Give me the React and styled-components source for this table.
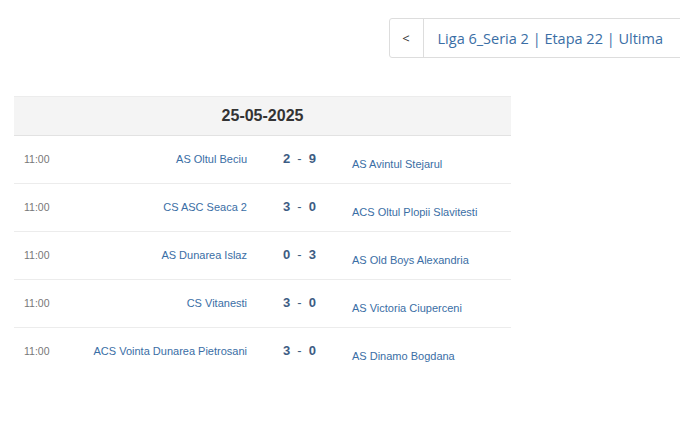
import React from "react";
import styled, { createGlobalStyle } from "styled-components";

const GlobalStyle = createGlobalStyle`
  body {
    margin: 0;
    background: #ffffff;
    font-family: "Liberation Sans", Arial, sans-serif;
  }
`;

const Page = styled.div`
  width: 680px;
  height: 427px;
  overflow: hidden;
  display: flex;
  flex-direction: column;
`;

const NavRow = styled.div`
  display: flex;
  justify-content: flex-end;
  padding-top: 18px;
  margin-right: -20px;
`;

const Nav = styled.div`
  display: flex;
  height: 40px;
  border: 1px solid #dddddd;
  border-radius: 3px;
  box-sizing: border-box;
  font-family: "Open Sans", sans-serif;
`;

const BackButton = styled.div`
  width: 33px;
  display: flex;
  align-items: center;
  justify-content: center;
  border-right: 1px solid #dddddd;
  color: #333333;
  font-size: 13px;
`;

const NavLabel = styled.div`
  display: flex;
  align-items: center;
  padding: 0 36px 0 14px;
  color: #3a6ea5;
  font-size: 14.5px;
`;

const Table = styled.div`
  width: 497px;
  margin: 38px 0 0 14px;
`;

const DateHeader = styled.div`
  height: 38px;
  background: #f4f4f4;
  border-top: 1px solid #ececec;
  border-bottom: 1px solid #e2e2e2;
  display: flex;
  align-items: center;
  justify-content: center;
  font-size: 16px;
  font-weight: bold;
  color: #333333;
`;

const Row = styled.div`
  display: grid;
  grid-template-columns: 70px 163px 105px 1fr;
  height: 47px;
  border-bottom: 1px solid ${(p) => (p.last ? "transparent" : "#ececec")};
  box-sizing: content-box;
`;

const Time = styled.div`
  padding: 17px 0 0 10px;
  font-size: 10.5px;
  color: #777777;
`;

const Home = styled.div`
  padding-top: 17px;
  text-align: right;
  font-size: 11px;
  color: #3a6ea5;
`;

const Score = styled.div`
  display: flex;
  justify-content: center;
  gap: 7px;
  padding-top: 15px;
  font-size: 13px;
  font-weight: bold;
  color: #3d5c83;
`;

const Dash = styled.span`
  font-weight: normal;
`;

const Away = styled.div`
  padding-top: 22px;
  font-size: 11px;
  color: #3a6ea5;
`;

const matches = [
  { time: "11:00", home: "AS Oltul Beciu", hs: 2, as: 9, away: "AS Avintul Stejarul" },
  { time: "11:00", home: "CS ASC Seaca 2", hs: 3, as: 0, away: "ACS Oltul Plopii Slavitesti" },
  { time: "11:00", home: "AS Dunarea Islaz", hs: 0, as: 3, away: "AS Old Boys Alexandria" },
  { time: "11:00", home: "CS Vitanesti", hs: 3, as: 0, away: "AS Victoria Ciuperceni" },
  { time: "11:00", home: "ACS Vointa Dunarea Pietrosani", hs: 3, as: 0, away: "AS Dinamo Bogdana" },
];

export default function App() {
  return (
    <Page>
      <GlobalStyle />
      <NavRow>
        <Nav>
          <BackButton>&lt;</BackButton>
          <NavLabel>Liga 6_Seria 2 | Etapa 22 | Ultima</NavLabel>
        </Nav>
      </NavRow>
      <Table>
        <DateHeader>25-05-2025</DateHeader>
        {matches.map((m, i) => (
          <Row key={i} last={i === matches.length - 1}>
            <Time>{m.time}</Time>
            <Home>{m.home}</Home>
            <Score>
              <span>{m.hs}</span>
              <Dash>-</Dash>
              <span>{m.as}</span>
            </Score>
            <Away>{m.away}</Away>
          </Row>
        ))}
      </Table>
    </Page>
  );
}
